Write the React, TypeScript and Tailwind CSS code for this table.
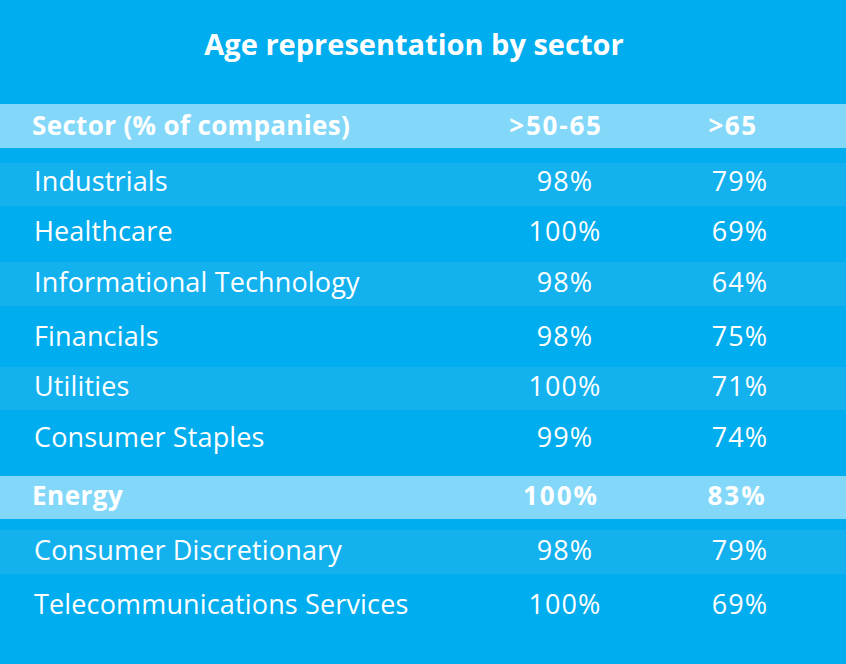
const rows = [
  { name: "Industrials", a: "98%", b: "79%", kind: "alt", h: "h-[43px]", pt: "pt-[4px]" },
  { name: "Healthcare", a: "100%", b: "69%", kind: "plain", h: "h-[56px]", pt: "pt-[11px]" },
  { name: "Informational Technology", a: "98%", b: "64%", kind: "alt", h: "h-[44px]", pt: "pt-[6px]" },
  { name: "Financials", a: "98%", b: "75%", kind: "plain", h: "h-[61px]", pt: "pt-[16px]" },
  { name: "Utilities", a: "100%", b: "71%", kind: "alt", h: "h-[43px]", pt: "pt-[5px]" },
  { name: "Consumer Staples", a: "99%", b: "74%", kind: "plain", h: "h-[66px]", pt: "pt-[13px]" },
  { name: "Energy", a: "100%", b: "83%", kind: "hi", h: "h-[43px]", pt: "pt-[6px]" },
  { name: "Consumer Discretionary", a: "98%", b: "79%", kind: "alt", h: "h-[44px]", pt: "pt-[6px]", mt: "mt-[11px]" },
  { name: "Telecommunications Services", a: "100%", b: "69%", kind: "plain", h: "h-[90px]", pt: "pt-[16px]" },
];

export default function App() {
  return (
    <div
      className="w-[846px] h-[664px] bg-[#00adee] text-white overflow-hidden"
      style={{ fontFamily: '"Open Sans", "Liberation Sans", sans-serif' }}
    >
      <div className="h-[104px] pt-[29px] pr-[18px] text-center text-[29px] font-bold leading-none">
        Age representation by sector
      </div>

      {/* header */}
      <div className="h-[44px] bg-[#83d8f9] grid grid-cols-[471px_170px_184px] pt-[8px] text-[26px] font-bold leading-none">
        <div className="pl-[32px] tracking-[0.35px]">Sector (% of companies)</div>
        <div className="text-center tracking-[1.8px]">&gt;50-65</div>
        <div className="text-center tracking-[1.4px]">&gt;65</div>
      </div>
      <div className="h-[15px]" />

      {rows.map((r) => (
        <div
          key={r.name}
          className={[
            "grid leading-none",
            r.h,
            r.pt,
            r.mt ?? "",
            r.kind === "hi"
              ? "bg-[#83d8f9] font-bold text-[26px] grid-cols-[476px_170px_182px]"
              : "text-[27px] grid-cols-[480px_170px_180px]",
            r.kind === "alt" ? "bg-[#13b2ef]" : "",
          ].join(" ")}
        >
          <div
            className={
              r.kind === "hi" ? "pl-[32px] tracking-[0.5px]" : "pl-[34px] tracking-[0.15px]"
            }
          >
            {r.name}
          </div>
          <div className={r.kind === "hi" ? "text-center tracking-[2px]" : "text-center tracking-[1.1px]"}>
            {r.a}
          </div>
          <div className={r.kind === "hi" ? "text-center tracking-[2px]" : "text-center tracking-[1.1px]"}>
            {r.b}
          </div>
        </div>
      ))}
    </div>
  );
}
